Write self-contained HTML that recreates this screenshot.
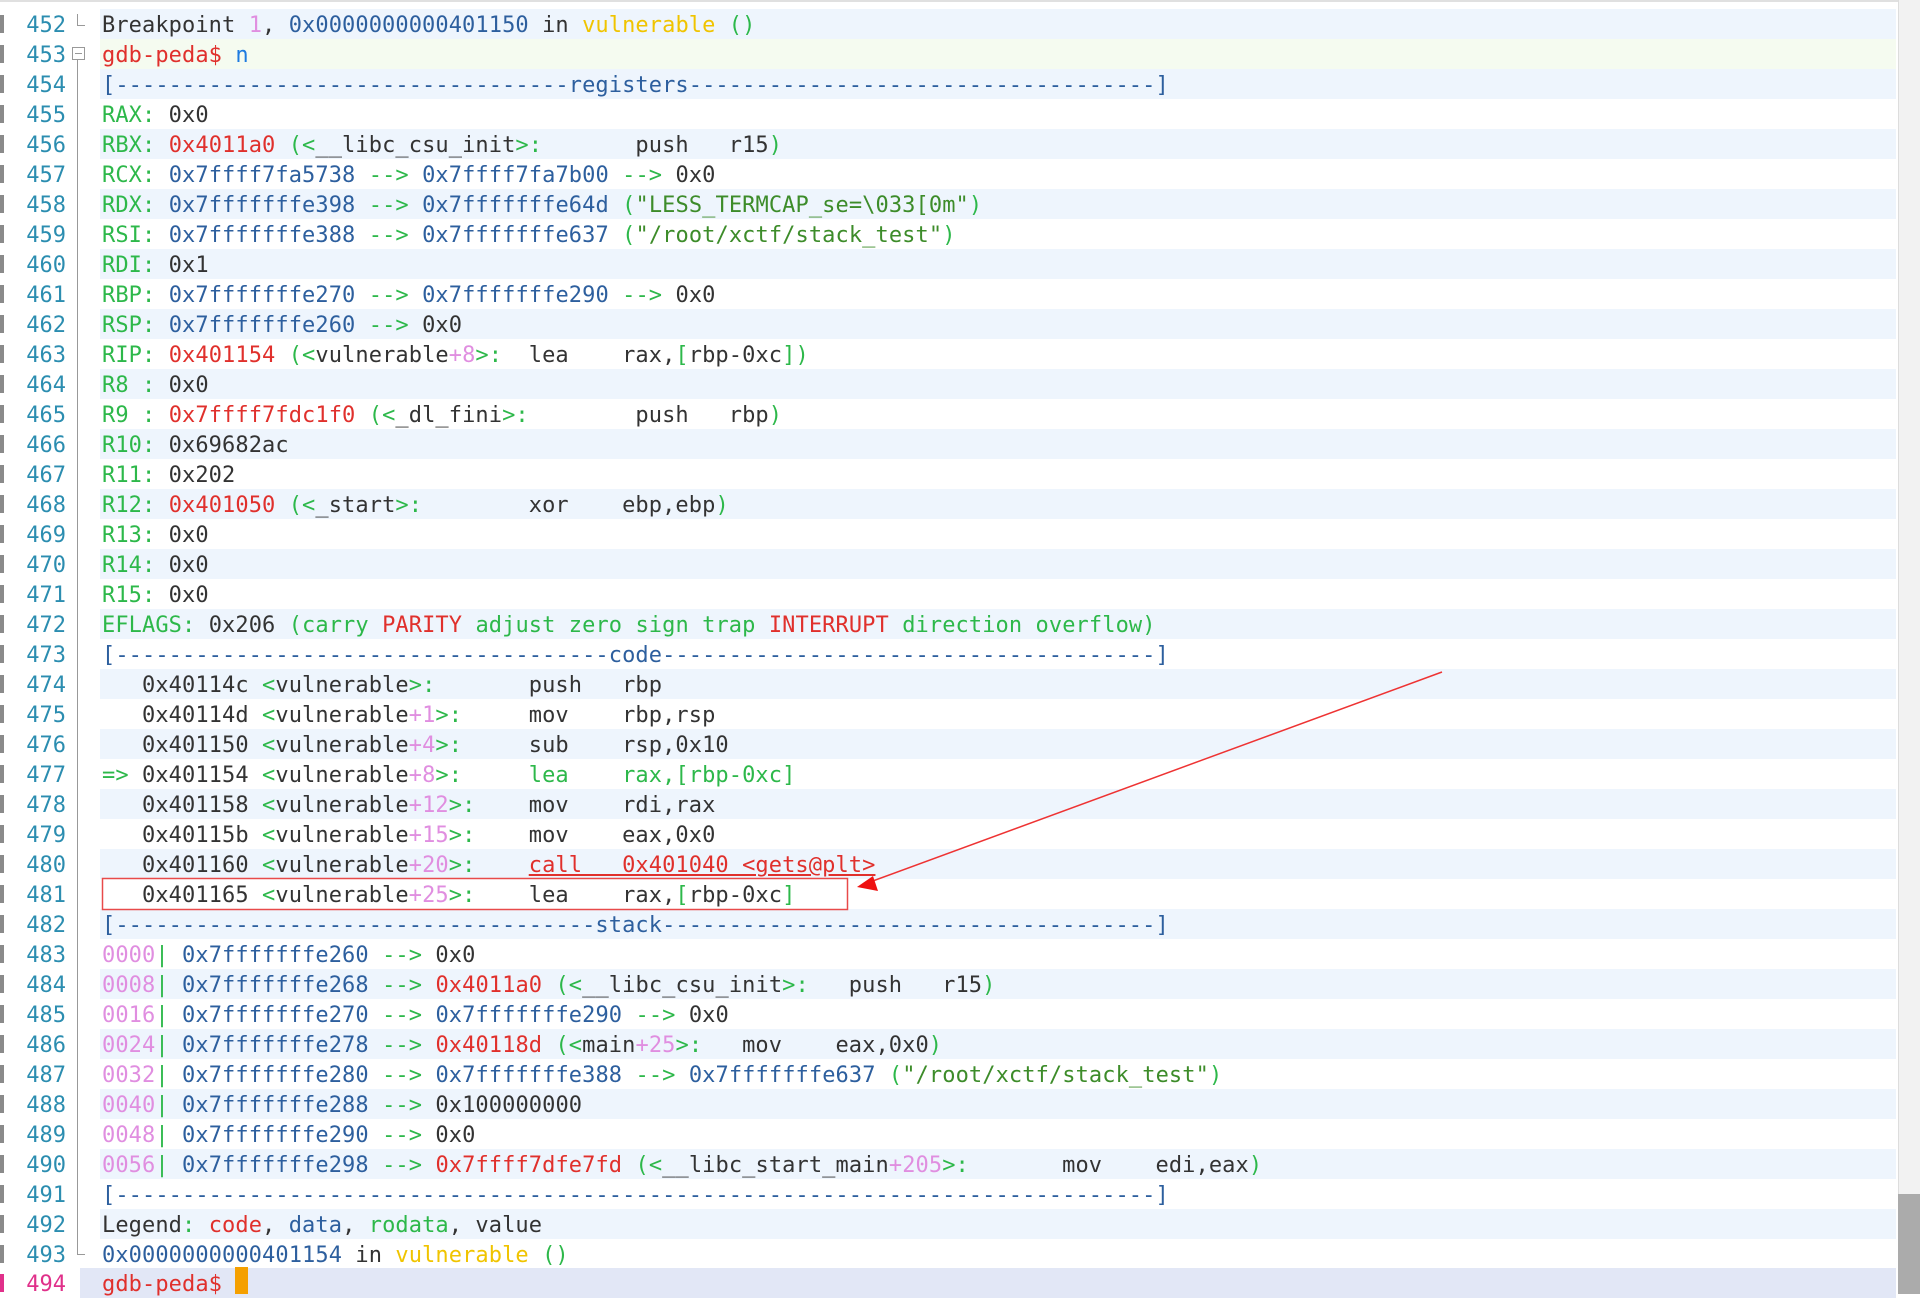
<!DOCTYPE html>
<html><head><meta charset="utf-8">
<style>
html,body{margin:0;padding:0;}
body{width:1920px;height:1294px;background:#fff;position:relative;overflow:hidden;font-family:"DejaVu Sans Mono","Liberation Mono",monospace;font-size:22px;color:#333;}
.row{position:absolute;left:0;width:1898px;height:30px;}
.bg{position:absolute;left:100px;right:2px;top:0;bottom:0;}
.row.e .bg{background:#eef5fd;}
.row.cur .bg{background:#e2e7f6;left:80px;}
.row.g .bg{background:#f5fbf0;}
.mk{position:absolute;left:0;top:6px;width:4px;height:18px;background:#8a8a8a;}
.ln{position:absolute;left:0;width:66px;text-align:right;top:2px;line-height:30px;color:#2b8db0;}
.tx{position:absolute;left:102px;top:2px;line-height:30px;white-space:pre;tab-size:8;-moz-tab-size:8;letter-spacing:0.09px;}
.g{color:#2db84a}.b{color:#2d5f9e}.r{color:#e0302c}.p{color:#e08ee0}.y{color:#f0c400}.s{color:#3d8c2a}.d{color:#333}
.u{text-decoration:underline;}
#fold{position:absolute;left:77px;top:54px;width:1px;height:1200px;background:#999;}
#sb{position:absolute;left:1898px;top:0;width:22px;height:1294px;background:#f2f2f2;border-left:1px solid #ddd;}
#th{position:absolute;left:1898px;top:1194px;width:22px;height:100px;background:#ababab;}
#topline{position:absolute;left:0;top:0;width:1898px;height:2px;background:#e0e0e0;}
</style></head><body>
<div id="topline"></div>
<div id="fold"></div>
<div style="position:absolute;left:77px;top:14px;width:1px;height:12px;background:#999"></div>
<div style="position:absolute;left:77px;top:25px;width:8px;height:1px;background:#999"></div>
<div style="position:absolute;left:72px;top:47px;width:11px;height:11px;border:1px solid #999;background:#fff"></div>
<div style="position:absolute;left:75px;top:53px;width:7px;height:1px;background:#999"></div>
<div style="position:absolute;left:77px;top:1254px;width:8px;height:1px;background:#999"></div>

<div class="row e" style="top:9px"><div class="bg"></div><div class="mk"></div><div class="ln">452</div><div class="tx">Breakpoint <span class="p">1</span>, <span class="b">0x0000000000401150</span> in <span class="y">vulnerable</span> <span class="g">()</span></div></div>
<div class="row g" style="top:39px"><div class="bg"></div><div class="mk"></div><div class="ln">453</div><div class="tx"><span class="r">gdb-peda$</span> <span style="color:#1e7be0">n</span></div></div>
<div class="row e" style="top:69px"><div class="bg"></div><div class="mk"></div><div class="ln">454</div><div class="tx b">[----------------------------------registers-----------------------------------]</div></div>
<div class="row" style="top:99px"><div class="bg"></div><div class="mk"></div><div class="ln">455</div><div class="tx"><span class="g">RAX:</span> 0x0</div></div>
<div class="row e" style="top:129px"><div class="bg"></div><div class="mk"></div><div class="ln">456</div><div class="tx"><span class="g">RBX:</span> <span class="r">0x4011a0</span> <span class="g">(&lt;</span>__libc_csu_init<span class="g">&gt;:</span>	push   r15<span class="g">)</span></div></div>
<div class="row" style="top:159px"><div class="bg"></div><div class="mk"></div><div class="ln">457</div><div class="tx"><span class="g">RCX:</span> <span class="b">0x7ffff7fa5738</span> <span class="g">--&gt;</span> <span class="b">0x7ffff7fa7b00</span> <span class="g">--&gt;</span> 0x0</div></div>
<div class="row e" style="top:189px"><div class="bg"></div><div class="mk"></div><div class="ln">458</div><div class="tx"><span class="g">RDX:</span> <span class="b">0x7fffffffe398</span> <span class="g">--&gt;</span> <span class="b">0x7fffffffe64d</span> <span class="g">(</span><span class="s">"LESS_TERMCAP_se=\033[0m"</span><span class="g">)</span></div></div>
<div class="row" style="top:219px"><div class="bg"></div><div class="mk"></div><div class="ln">459</div><div class="tx"><span class="g">RSI:</span> <span class="b">0x7fffffffe388</span> <span class="g">--&gt;</span> <span class="b">0x7fffffffe637</span> <span class="g">(</span><span class="s">"/root/xctf/stack_test"</span><span class="g">)</span></div></div>
<div class="row e" style="top:249px"><div class="bg"></div><div class="mk"></div><div class="ln">460</div><div class="tx"><span class="g">RDI:</span> 0x1</div></div>
<div class="row" style="top:279px"><div class="bg"></div><div class="mk"></div><div class="ln">461</div><div class="tx"><span class="g">RBP:</span> <span class="b">0x7fffffffe270</span> <span class="g">--&gt;</span> <span class="b">0x7fffffffe290</span> <span class="g">--&gt;</span> 0x0</div></div>
<div class="row e" style="top:309px"><div class="bg"></div><div class="mk"></div><div class="ln">462</div><div class="tx"><span class="g">RSP:</span> <span class="b">0x7fffffffe260</span> <span class="g">--&gt;</span> 0x0</div></div>
<div class="row" style="top:339px"><div class="bg"></div><div class="mk"></div><div class="ln">463</div><div class="tx"><span class="g">RIP:</span> <span class="r">0x401154</span> <span class="g">(&lt;</span>vulnerable<span class="p">+8</span><span class="g">&gt;:</span>	lea    rax,<span class="g">[</span>rbp-0xc<span class="g">])</span></div></div>
<div class="row e" style="top:369px"><div class="bg"></div><div class="mk"></div><div class="ln">464</div><div class="tx"><span class="g">R8 :</span> 0x0</div></div>
<div class="row" style="top:399px"><div class="bg"></div><div class="mk"></div><div class="ln">465</div><div class="tx"><span class="g">R9 :</span> <span class="r">0x7ffff7fdc1f0</span> <span class="g">(&lt;</span>_dl_fini<span class="g">&gt;:</span>	push   rbp<span class="g">)</span></div></div>
<div class="row e" style="top:429px"><div class="bg"></div><div class="mk"></div><div class="ln">466</div><div class="tx"><span class="g">R10:</span> 0x69682ac</div></div>
<div class="row" style="top:459px"><div class="bg"></div><div class="mk"></div><div class="ln">467</div><div class="tx"><span class="g">R11:</span> 0x202</div></div>
<div class="row e" style="top:489px"><div class="bg"></div><div class="mk"></div><div class="ln">468</div><div class="tx"><span class="g">R12:</span> <span class="r">0x401050</span> <span class="g">(&lt;</span>_start<span class="g">&gt;:</span>	xor    ebp,ebp<span class="g">)</span></div></div>
<div class="row" style="top:519px"><div class="bg"></div><div class="mk"></div><div class="ln">469</div><div class="tx"><span class="g">R13:</span> 0x0</div></div>
<div class="row e" style="top:549px"><div class="bg"></div><div class="mk"></div><div class="ln">470</div><div class="tx"><span class="g">R14:</span> 0x0</div></div>
<div class="row" style="top:579px"><div class="bg"></div><div class="mk"></div><div class="ln">471</div><div class="tx"><span class="g">R15:</span> 0x0</div></div>
<div class="row e" style="top:609px"><div class="bg"></div><div class="mk"></div><div class="ln">472</div><div class="tx"><span class="g">EFLAGS:</span> 0x206 <span class="g">(carry</span> <span class="r">PARITY</span> <span class="g">adjust zero sign trap</span> <span class="r">INTERRUPT</span> <span class="g">direction overflow)</span></div></div>
<div class="row" style="top:639px"><div class="bg"></div><div class="mk"></div><div class="ln">473</div><div class="tx b">[-------------------------------------code-------------------------------------]</div></div>
<div class="row e" style="top:669px"><div class="bg"></div><div class="mk"></div><div class="ln">474</div><div class="tx">   0x40114c <span class="g">&lt;</span>vulnerable<span class="g">&gt;:</span>	push   rbp</div></div>
<div class="row" style="top:699px"><div class="bg"></div><div class="mk"></div><div class="ln">475</div><div class="tx">   0x40114d <span class="g">&lt;</span>vulnerable<span class="p">+1</span><span class="g">&gt;:</span>	mov    rbp,rsp</div></div>
<div class="row e" style="top:729px"><div class="bg"></div><div class="mk"></div><div class="ln">476</div><div class="tx">   0x401150 <span class="g">&lt;</span>vulnerable<span class="p">+4</span><span class="g">&gt;:</span>	sub    rsp,0x10</div></div>
<div class="row" style="top:759px"><div class="bg"></div><div class="mk"></div><div class="ln">477</div><div class="tx"><span class="g">=&gt;</span> 0x401154 <span class="g">&lt;</span>vulnerable<span class="p">+8</span><span class="g">&gt;:</span>	<span class="g">lea    rax,[rbp-0xc]</span></div></div>
<div class="row e" style="top:789px"><div class="bg"></div><div class="mk"></div><div class="ln">478</div><div class="tx">   0x401158 <span class="g">&lt;</span>vulnerable<span class="p">+12</span><span class="g">&gt;:</span>	mov    rdi,rax</div></div>
<div class="row" style="top:819px"><div class="bg"></div><div class="mk"></div><div class="ln">479</div><div class="tx">   0x40115b <span class="g">&lt;</span>vulnerable<span class="p">+15</span><span class="g">&gt;:</span>	mov    eax,0x0</div></div>
<div class="row e" style="top:849px"><div class="bg"></div><div class="mk"></div><div class="ln">480</div><div class="tx">   0x401160 <span class="g">&lt;</span>vulnerable<span class="p">+20</span><span class="g">&gt;:</span>	<span class="r u">call   0x401040 &lt;gets@plt&gt;</span></div></div>
<div class="row" style="top:879px"><div class="bg"></div><div class="mk"></div><div class="ln">481</div><div class="tx">   0x401165 <span class="g">&lt;</span>vulnerable<span class="p">+25</span><span class="g">&gt;:</span>	lea    rax,<span class="g">[</span>rbp-0xc<span class="g">]</span></div></div>
<div class="row e" style="top:909px"><div class="bg"></div><div class="mk"></div><div class="ln">482</div><div class="tx b">[------------------------------------stack-------------------------------------]</div></div>
<div class="row" style="top:939px"><div class="bg"></div><div class="mk"></div><div class="ln">483</div><div class="tx"><span class="p">0000</span><span class="g">|</span> <span class="b">0x7fffffffe260</span> <span class="g">--&gt;</span> 0x0</div></div>
<div class="row e" style="top:969px"><div class="bg"></div><div class="mk"></div><div class="ln">484</div><div class="tx"><span class="p">0008</span><span class="g">|</span> <span class="b">0x7fffffffe268</span> <span class="g">--&gt;</span> <span class="r">0x4011a0</span> <span class="g">(&lt;</span>__libc_csu_init<span class="g">&gt;:</span>	push   r15<span class="g">)</span></div></div>
<div class="row" style="top:999px"><div class="bg"></div><div class="mk"></div><div class="ln">485</div><div class="tx"><span class="p">0016</span><span class="g">|</span> <span class="b">0x7fffffffe270</span> <span class="g">--&gt;</span> <span class="b">0x7fffffffe290</span> <span class="g">--&gt;</span> 0x0</div></div>
<div class="row e" style="top:1029px"><div class="bg"></div><div class="mk"></div><div class="ln">486</div><div class="tx"><span class="p">0024</span><span class="g">|</span> <span class="b">0x7fffffffe278</span> <span class="g">--&gt;</span> <span class="r">0x40118d</span> <span class="g">(&lt;</span>main<span class="p">+25</span><span class="g">&gt;:</span>	mov    eax,0x0<span class="g">)</span></div></div>
<div class="row" style="top:1059px"><div class="bg"></div><div class="mk"></div><div class="ln">487</div><div class="tx"><span class="p">0032</span><span class="g">|</span> <span class="b">0x7fffffffe280</span> <span class="g">--&gt;</span> <span class="b">0x7fffffffe388</span> <span class="g">--&gt;</span> <span class="b">0x7fffffffe637</span> <span class="g">(</span><span class="s">"/root/xctf/stack_test"</span><span class="g">)</span></div></div>
<div class="row e" style="top:1089px"><div class="bg"></div><div class="mk"></div><div class="ln">488</div><div class="tx"><span class="p">0040</span><span class="g">|</span> <span class="b">0x7fffffffe288</span> <span class="g">--&gt;</span> 0x100000000</div></div>
<div class="row" style="top:1119px"><div class="bg"></div><div class="mk"></div><div class="ln">489</div><div class="tx"><span class="p">0048</span><span class="g">|</span> <span class="b">0x7fffffffe290</span> <span class="g">--&gt;</span> 0x0</div></div>
<div class="row e" style="top:1149px"><div class="bg"></div><div class="mk"></div><div class="ln">490</div><div class="tx"><span class="p">0056</span><span class="g">|</span> <span class="b">0x7fffffffe298</span> <span class="g">--&gt;</span> <span class="r">0x7ffff7dfe7fd</span> <span class="g">(&lt;</span>__libc_start_main<span class="p">+205</span><span class="g">&gt;:</span>	mov    edi,eax<span class="g">)</span></div></div>
<div class="row" style="top:1179px"><div class="bg"></div><div class="mk"></div><div class="ln">491</div><div class="tx b">[------------------------------------------------------------------------------]</div></div>
<div class="row e" style="top:1209px"><div class="bg"></div><div class="mk"></div><div class="ln">492</div><div class="tx">Legend<span class="g">:</span> <span class="r">code</span>, <span class="b">data</span>, <span class="g">rodata</span>, value</div></div>
<div class="row" style="top:1239px"><div class="bg"></div><div class="mk"></div><div class="ln">493</div><div class="tx"><span class="b">0x0000000000401154</span> in <span class="y">vulnerable</span> <span class="g">()</span></div></div>
<div class="row cur" style="top:1268px"><div class="bg"></div><div class="mk" style="background:#e0308a"></div><div class="ln" style="color:#e0308a">494</div><div class="tx"><span class="r">gdb-peda$</span></div></div>
<div style="position:absolute;left:235px;top:1267px;width:13px;height:27px;background:#f5a000"></div>

<svg style="position:absolute;left:0;top:0" width="1920" height="1294">
<rect x="102.5" y="878.5" width="745" height="31" fill="none" stroke="#e84a4a" stroke-width="1.5"/>
<line x1="1442" y1="672" x2="870" y2="882" stroke="#ee3333" stroke-width="1.5"/>
<polygon points="857,887 873,876 878,891" fill="#ee1111"/>
</svg>
<div id="sb"></div><div id="th"></div>
</body></html>
